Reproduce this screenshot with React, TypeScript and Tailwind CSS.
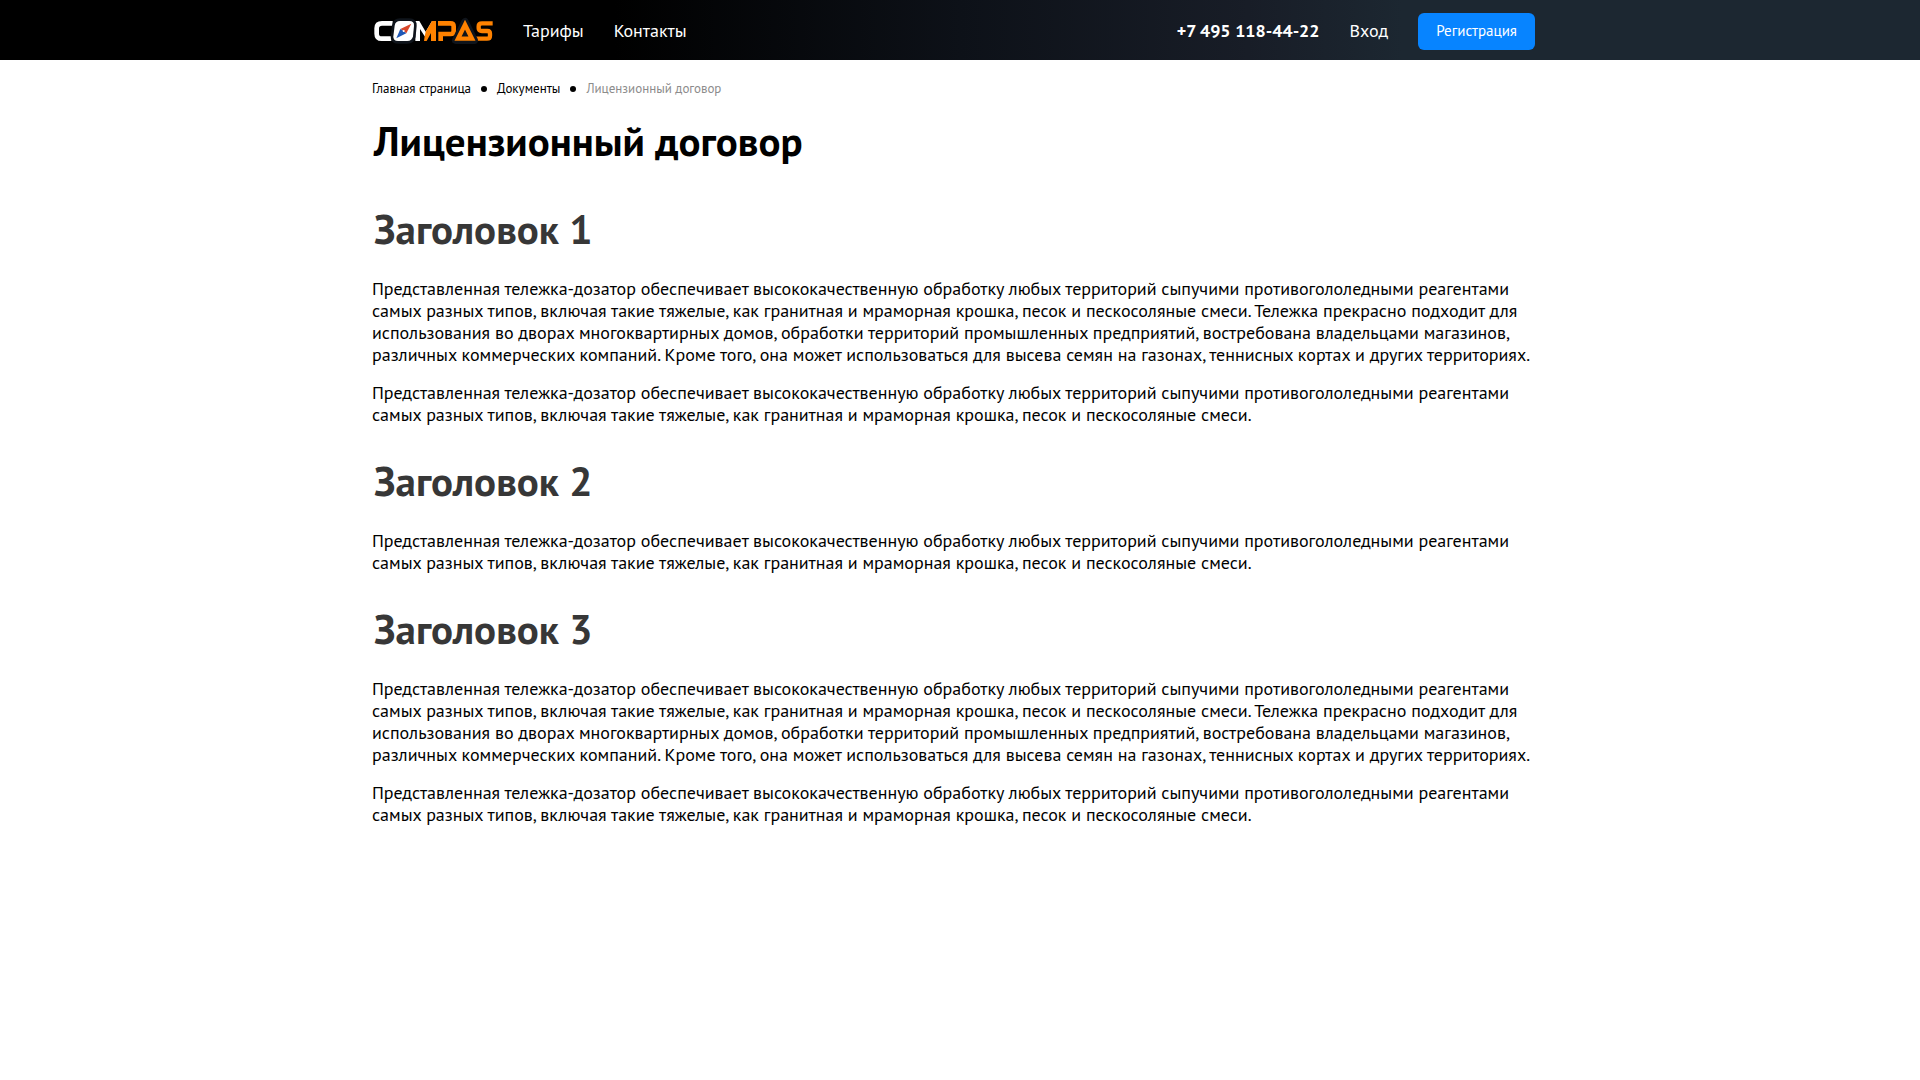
const INTRO =
  "Представленная тележка-дозатор обеспечивает высококачественную обработку любых территорий сыпучими противогололедными реагентами самых разных типов, включая такие тяжелые, как гранитная и мраморная крошка, песок и пескосоляные смеси.";

const FULL =
  INTRO +
  " Тележка прекрасно подходит для использования во дворах многоквартирных домов, обработки территорий промышленных предприятий, востребована владельцами магазинов, различных коммерческих компаний. Кроме того, она может использоваться для высева семян на газонах, теннисных кортах и других территориях.";

const SECTIONS = [
  { title: "Заголовок 1", paragraphs: [FULL, INTRO] },
  { title: "Заголовок 2", paragraphs: [INTRO] },
  { title: "Заголовок 3", paragraphs: [FULL, INTRO] },
];

function Logo() {
  return (
    <svg viewBox="36 48 372 84" className="h-7 w-[124px]" role="img" aria-label="COMPAS" fill="none">
      <path d="M98 67H66Q50 67 50 82V98Q50 113 65 113H94" stroke="#fff" strokeWidth="14" />
      <path d="M166 120V60H178L197 92L216 60H228V120H213V84L200 106H194L180 84V120Z" fill="#fff" />
      <path d="M194 106L192 120H200L213 96V120H228V60H216L197 92Z" fill="#ff8200" />
      <path d="M242 120V99H272Q281 99 281 90V76Q281 67 271 67H234" stroke="#ff8200" strokeWidth="14" />
      <path d="M398 67H366Q356 67 356 75V82Q356 90 366 90H382Q390 90 390 98V104Q390 113 381 113H346" stroke="#ff8200" strokeWidth="13" />
      <path d="M315 62L287 118H343Z" fill="#0f141b" stroke="#0f141b" strokeWidth="22" strokeLinejoin="round" />
      <path d="M315 71L294 113H336Z" fill="#0f141b" stroke="#ff8200" strokeWidth="13" />
      <path
        d="M120 60H148Q163 60 162 74L159 106Q156 120 142 120H114Q99 120 100 106L104 74Q106 60 120 60Z"
        fill="#fff"
        stroke="#0f141b"
        strokeWidth="16"
        paintOrder="stroke"
      />
      <path d="M154 68L121 84L139 97Z" fill="#d9482b" />
      <path d="M109 112L121 84L139 97Z" fill="#1f57b5" />
      <circle cx="131" cy="90" r="3" fill="#fff" />
    </svg>
  );
}

function Dot() {
  return <span aria-hidden="true" className="size-1.5 rounded-full bg-black" />;
}

export default function App() {
  return (
    <div className="min-h-screen bg-white font-['PT_Sans','Lato',sans-serif] text-[18px] leading-[22px] text-black">
      <header className="bg-[linear-gradient(90deg,#000_32%,#0d1118_50%,#181d27_65%,#1c2731_73%)] pr-[13px] text-white">
        <div className="mx-auto flex h-[60px] max-w-[1163px] items-center justify-between pt-0.5">
          <nav className="flex items-center gap-[30px]">
            <a href="#" className="-mr-[3px]">
              <Logo />
            </a>
            <a href="#">Тарифы</a>
            <a href="#">Контакты</a>
          </nav>
          <div className="flex items-center gap-[30px]">
            <a href="tel:+74951184422" className="font-bold">
              +7 495 118-44-22
            </a>
            <a href="#">Вход</a>
            <button type="button" className="h-[37px] rounded-md bg-[#0784ff] px-[18px] text-[15px]">
              Регистрация
            </button>
          </div>
        </div>
      </header>

      <div className="pr-[13px]">
        <main className="mx-auto max-w-[1163px] pt-[21px] pb-8">
          <nav aria-label="Навигация" className="flex items-center gap-2.5 text-[13px] leading-4">
            <a href="#">Главная страница</a>
            <Dot />
            <a href="#">Документы</a>
            <Dot />
            <span className="text-[#8c8c8c]">Лицензионный договор</span>
          </nav>

          <h1 className="mt-5 mb-10 pl-0.5 text-[41px] leading-[48px] font-bold">Лицензионный договор</h1>

          <div className="flex flex-col gap-[31px]">
            {SECTIONS.map((section) => (
              <section key={section.title}>
                <h2 className="mb-[25px] pl-0.5 text-[41px] leading-[48px] font-bold text-[#373737]">{section.title}</h2>
                <div className="flex flex-col gap-4">
                  {section.paragraphs.map((text, i) => (
                    <p key={i}>{text}</p>
                  ))}
                </div>
              </section>
            ))}
          </div>
        </main>
      </div>
    </div>
  );
}
